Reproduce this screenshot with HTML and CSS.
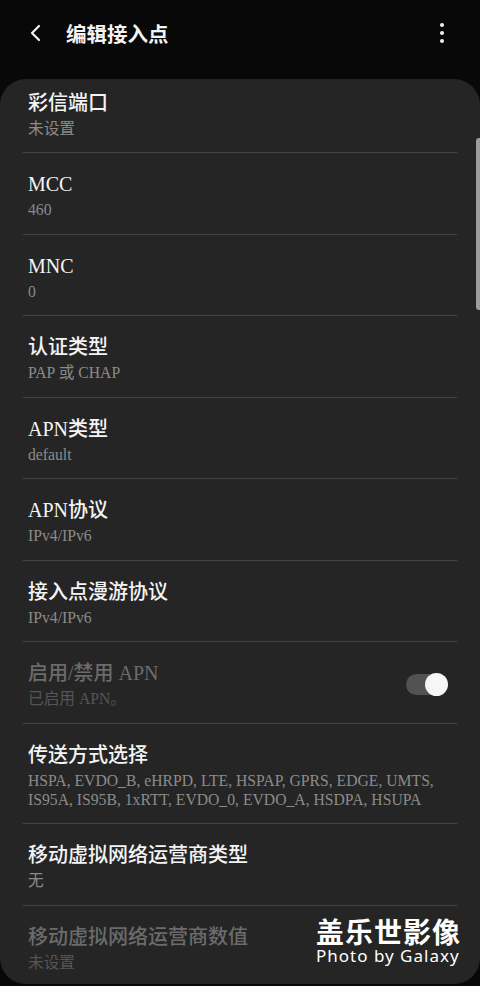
FILE: index.html
```html
<!DOCTYPE html>
<html lang="zh-CN">
<head>
<meta charset="utf-8">
<title>编辑接入点</title>
<link rel="stylesheet" href="styles.css">
</head>
<body>
<div class="screen">
  <header class="appbar">
    <div class="back">
      <svg width="14" height="18" viewBox="0 0 14 18"><path d="M10 2 L3 9 L10 16" fill="none" stroke="#f2f2f2" stroke-width="2.2" stroke-linecap="round" stroke-linejoin="round"/></svg>
    </div>
    <h1 class="page-title">编辑接入点</h1>
    <div class="more">
      <span class="dot"></span><span class="dot"></span><span class="dot"></span>
    </div>
  </header>

  <main class="card">
    <div class="list">
      <div class="item">
        <div class="title">彩信端口</div>
        <div class="sub">未设置</div>
      </div>
      <div class="item">
        <div class="title">MCC</div>
        <div class="sub">460</div>
      </div>
      <div class="item">
        <div class="title">MNC</div>
        <div class="sub">0</div>
      </div>
      <div class="item">
        <div class="title">认证类型</div>
        <div class="sub">PAP 或 CHAP</div>
      </div>
      <div class="item">
        <div class="title">APN类型</div>
        <div class="sub">default</div>
      </div>
      <div class="item">
        <div class="title">APN协议</div>
        <div class="sub">IPv4/IPv6</div>
      </div>
      <div class="item">
        <div class="title">接入点漫游协议</div>
        <div class="sub">IPv4/IPv6</div>
      </div>
      <div class="item item-switch disabled">
        <div class="texts">
          <div class="title">启用/禁用 APN</div>
          <div class="sub">已启用 APN。</div>
        </div>
        <div class="toggle"><span class="thumb"></span></div>
      </div>
      <div class="item">
        <div class="title">传送方式选择</div>
        <div class="sub">HSPA, EVDO_B, eHRPD, LTE, HSPAP, GPRS, EDGE, UMTS, IS95A, IS95B, 1xRTT, EVDO_0, EVDO_A, HSDPA, HSUPA</div>
      </div>
      <div class="item">
        <div class="title">移动虚拟网络运营商类型</div>
        <div class="sub">无</div>
      </div>
      <div class="item disabled">
        <div class="title">移动虚拟网络运营商数值</div>
        <div class="sub">未设置</div>
      </div>
    </div>
    <div class="scrollbar"></div>
  </main>

  <div class="watermark">
    <div class="wm-cn">盖乐世影像</div>
    <div class="wm-en">Photo by Galaxy</div>
  </div>
</div>
</body>
</html>
```

FILE: styles.css
```css
html, body {
  margin: 0;
  padding: 0;
  background: #080808;
}

.screen {
  position: relative;
  width: 480px;
  height: 986px;
  overflow: hidden;
  background: #080808;
  font-family: "Liberation Serif", "Noto Sans CJK SC", serif;
}

.appbar {
  height: 66px;
  display: flex;
  align-items: center;
  padding: 0 0 0 29px;
}

.back {
  width: 14px;
  height: 18px;
  display: flex;
}

.page-title {
  margin: 0 0 0 23px;
  font-size: 20.5px;
  line-height: 24px;
  font-weight: 700;
  color: #f4f4f4;
  font-family: "Noto Sans CJK SC", sans-serif;
  flex: 1;
}

.more {
  width: 4px;
  display: flex;
  flex-direction: column;
  gap: 4px;
  margin-right: 36px;
}

.dot {
  width: 4px;
  height: 4px;
  border-radius: 50%;
  background: #f0f0f0;
}

.card {
  position: relative;
  margin-top: 13px;
  height: 905px;
  background: #252525;
  border-radius: 26px;
  overflow: hidden;
}

.list {
  margin-top: -8.5px;
}

.item {
  margin: 0 23px;
  padding: 19px 9px 14.5px 5px;
  border-top: 1px solid #454545;
}

.item:first-child {
  border-top: 1px solid transparent;
}

.title {
  font-size: 20px;
  line-height: 24px;
  font-weight: 500;
  color: #f4f4f4;
}

.sub {
  margin-top: 4px;
  font-size: 15.7px;
  line-height: 19px;
  color: #8b8b8b;
}

.disabled .title {
  color: #6b6b6b;
}

.disabled .sub {
  color: #555555;
}

.item-switch {
  display: flex;
  align-items: center;
}

.item-switch .texts {
  flex: 1;
}

.toggle {
  position: relative;
  width: 42px;
  height: 23px;
}

.toggle::before {
  content: "";
  position: absolute;
  left: 0;
  top: 1px;
  width: 38px;
  height: 21px;
  border-radius: 11px;
  background: #525252;
}

.thumb {
  position: absolute;
  right: 0;
  top: 0;
  width: 23px;
  height: 23px;
  border-radius: 50%;
  background: #f6f6f6;
}

.scrollbar {
  position: absolute;
  right: 0;
  top: 59px;
  width: 4px;
  height: 172px;
  border-radius: 3px 0 0 3px;
  background: #9d9d9d;
}

.watermark {
  position: absolute;
  left: 316px;
  top: 916px;
  color: #ffffff;
}

.wm-cn {
  font-family: "Noto Sans CJK SC", sans-serif;
  font-weight: 700;
  font-size: 28px;
  line-height: 30px;
  letter-spacing: 1px;
}

.wm-en {
  font-family: "Noto Sans", sans-serif;
  font-size: 17px;
  line-height: 20px;
  letter-spacing: 1px;
}
```
